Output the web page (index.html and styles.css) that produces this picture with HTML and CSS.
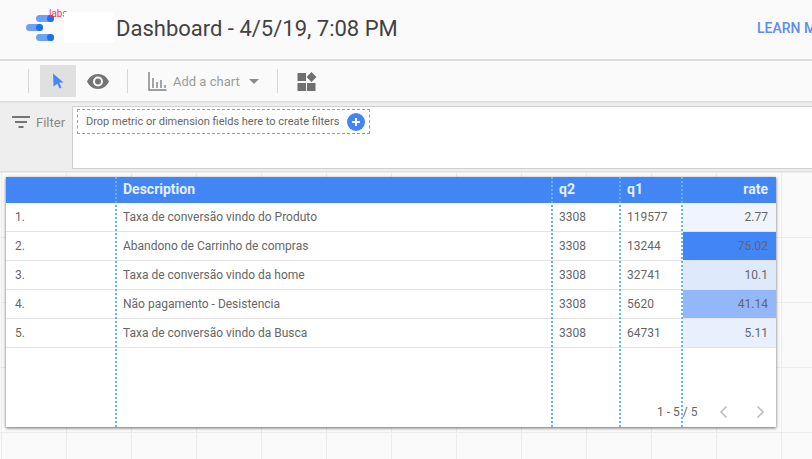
FILE: index.html
```html
<!DOCTYPE html>
<html lang="en">
<head>
<meta charset="utf-8">
<title>Dashboard</title>
<link rel="stylesheet" href="styles.css">
</head>
<body>
<div class="page">
  <header class="topbar">
    <div class="logo">
      <svg class="logo-mark" width="30" height="30" viewBox="0 0 30 30">
        <rect x="11" y="1" width="18" height="7" rx="3.5" fill="#6ea0f6"/><circle cx="25.5" cy="4.5" r="3.5" fill="#1a73e8"/>
        <rect x="1" y="10" width="17" height="7" rx="3.5" fill="#6ea0f6"/><circle cx="14.5" cy="13.5" r="3.5" fill="#1a73e8"/>
        <rect x="11" y="20" width="18" height="7" rx="3.5" fill="#6ea0f6"/><circle cx="25.5" cy="23.5" r="3.5" fill="#1a73e8"/>
      </svg>
      <span class="logo-label">labs</span>
      <span class="logo-mask"></span>
    </div>
    <h1 class="title">Dashboard - 4/5/19, 7:08 PM</h1>
    <a class="learn">LEARN MORE</a>
  </header>

  <nav class="toolbar">
    <span class="sep sep-first"></span>
    <button class="tool tool-active" aria-label="Select">
      <svg width="12" height="16" viewBox="0 0 12 16"><path d="M1 0.5 L11.5 9.5 L7.2 9.8 L9.5 14.6 L7.6 15.5 L5.3 10.7 L1.6 13.5 Z" fill="#4a86f5"/></svg>
    </button>
    <button class="tool tool-eye" aria-label="View">
      <svg width="22" height="15" viewBox="0 0 22 15"><path fill-rule="evenodd" d="M11 0 C16 0 20 3 22 7.5 C20 12 16 15 11 15 C6 15 2 12 0 7.5 C2 3 6 0 11 0 Z M11 2.5 A5 5 0 1 0 11 12.5 A5 5 0 1 0 11 2.5 Z" fill="#757575"/><circle cx="11" cy="7.5" r="3" fill="#757575"/></svg>
    </button>
    <span class="sep sep-second"></span>
    <svg class="chart-icon" width="19" height="20" viewBox="0 0 19 20"><path d="M1 1 V19 H18.500 M5 7 V17 M9 11 V17 M13 9 V17 M17 14 V17" fill="none" stroke="#808080" stroke-width="1.400"/></svg>
    <span class="add-chart">Add a chart</span>
    <svg class="caret" width="10" height="5" viewBox="0 0 10 5"><path d="M0 0 H10 L5 5 Z" fill="#8a8a8a"/></svg>
    <span class="sep sep-third"></span>
    <svg class="widgets" width="20" height="19" viewBox="0 0 20 19"><path d="M0.500 1 H9 V9 H0.500 Z M0.500 11 H9 V19 H0.500 Z M10 11 H18.500 V19 H10 Z M14.500 0 L19.500 5 L14.500 10 L9.500 5 Z" fill="#707070"/></svg>
  </nav>

  <section class="filterbar">
    <div class="filter-label">
      <svg width="18" height="12" viewBox="0 0 18 12"><path d="M0 0 H18 V2 H0 Z M3 5 H15 V7 H3 Z M6.500 10 H11.500 V12 H6.500 Z" fill="#757575"/></svg>
      <span>Filter</span>
    </div>
    <div class="filter-box">
      <div class="dropzone">
        <span>Drop metric or dimension fields here to create filters</span>
        <span class="plus"><svg width="18" height="18" viewBox="0 0 18 18"><circle cx="9" cy="9" r="9" fill="#4285f4"/><path d="M8 5 H10 V8 H13 V10 H10 V13 H8 V10 H5 V8 H8 Z" fill="#fff"/></svg></span>
      </div>
    </div>
  </section>

  <main class="canvas">
    <div class="card">
      <table class="data">
        <colgroup><col class="c-num"><col class="c-desc"><col class="c-q2"><col class="c-q1"><col class="c-rate"></colgroup>
        <thead>
          <tr><th></th><th>Description</th><th>q2</th><th>q1</th><th class="right">rate</th></tr>
        </thead>
        <tbody>
          <tr><td>1.</td><td>Taxa de conversão vindo do Produto</td><td>3308</td><td>119577</td><td class="right" style="background:#eff4fe">2.77</td></tr>
          <tr><td>2.</td><td>Abandono de Carrinho de compras</td><td>3308</td><td>13244</td><td class="right" style="background:#4285f4">75.02</td></tr>
          <tr><td>3.</td><td>Taxa de conversão vindo da home</td><td>3308</td><td>32741</td><td class="right" style="background:#dfe9fc">10.1</td></tr>
          <tr><td>4.</td><td>Não pagamento - Desistencia</td><td>3308</td><td>5620</td><td class="right" style="background:#93b7f9">41.14</td></tr>
          <tr><td>5.</td><td>Taxa de conversão vindo da Busca</td><td>3308</td><td>64731</td><td class="right" style="background:#e8effd">5.11</td></tr>
        </tbody>
      </table>
      <div class="pager">
        <span class="pager-text">1 - 5 / 5</span>
        <svg class="chev" width="9" height="14" viewBox="0 0 9 14"><path d="M7.500 1.500 L2 7 L7.500 12.500" fill="none" stroke="#bdbdbd" stroke-width="1.600"/></svg>
        <svg class="chev chev-next" width="9" height="14" viewBox="0 0 9 14"><path d="M1.500 1.500 L7 7 L1.500 12.500" fill="none" stroke="#bdbdbd" stroke-width="1.600"/></svg>
      </div>
      <span class="guide guide-a"></span>
      <span class="guide guide-b"></span>
      <span class="guide guide-c"></span>
      <span class="guide guide-d"></span>
    </div>
  </main>
</div>
</body>
</html>
```
FILE: styles.css
```css
* { box-sizing: border-box; }
html, body { margin: 0; padding: 0; }
body { font-family: Roboto, "Liberation Sans", sans-serif; color: #666; overflow: hidden; }
.page { width: 812px; height: 459px; overflow: hidden; display: flex; flex-direction: column; background: #fafafa; }

.topbar { height: 61px; flex: none; display: flex; align-items: center; background: #fafafa; border-bottom: 2px solid #dcdcdc; white-space: nowrap; }
.logo { position: relative; width: 116px; height: 59px; flex: none; }
.logo-mark { position: absolute; left: 25px; top: 14px; }
.logo-label { position: absolute; left: 49px; top: 8px; font-size: 10px; line-height: 12px; color: #ff3355; }
.logo-mask { position: absolute; left: 64px; top: 12px; width: 51px; height: 31px; background: #fff; }
.title { margin: 0 0 2px; font-size: 22px; line-height: 28px; font-weight: 400; color: #424242; }
.learn { margin-left: auto; margin-right: -26px; margin-bottom: 4px; font-size: 14px; font-weight: 500; color: #5b8def; width: 81px; overflow: hidden; }

.toolbar { height: 41px; flex: none; display: flex; align-items: center; background: #fafafa; border-bottom: 1px solid #dcdcdc; padding-left: 28px; }
.sep { width: 1px; height: 24px; background: #d8d8d8; flex: none; }
.tool { border: 0; padding: 0; background: none; display: flex; align-items: center; justify-content: center; flex: none; }
.tool-active { width: 36px; height: 32px; background: #e0e0e0; margin-left: 11px; }
.tool-eye { width: 22px; height: 15px; margin-left: 11px; }
.sep-second { margin-left: 18px; }
.chart-icon { margin-left: 20px; flex: none; }
.add-chart { margin-left: 6px; font-size: 13px; color: #9a9a9a; white-space: nowrap; }
.caret { margin-left: 9px; flex: none; }
.sep-third { margin-left: 18px; }
.widgets { margin-left: 19px; flex: none; }

.filterbar { height: 70px; flex: none; display: flex; background: #eeeeee; border-bottom: 1px solid #dedede; border-top: 1px solid #e4e4e4; }
.filter-label { width: 72px; flex: none; display: flex; align-items: flex-start; padding: 12px 0 0 12px; font-size: 13px; color: #888; }
.filter-label svg { margin-top: 1px; flex: none; }
.filter-label span { margin-left: 6px; line-height: 15px; }
.filter-box { flex: 1; height: 63px; margin-top: 3px; background: #fff; border: 1px solid #cfcfcf; border-right: 0; padding: 2px 0 0 4px; }
.dropzone { display: inline-flex; align-items: center; width: 293px; height: 25px; padding-left: 8px; border: 1px dashed #9e9e9e; font-size: 11px; color: #666; white-space: nowrap; }
.plus { margin-left: auto; margin-right: 4px; display: flex; }

.canvas { flex: 1; min-height: 0; padding: 5px 0 0 6px; background-color: #fafafa;
  background-image: linear-gradient(#ececec 1px, transparent 1px), linear-gradient(90deg, #ececec 1px, transparent 1px);
  background-size: 65px 65px; background-position: 1px 0; }
.card { position: relative; width: 770px; height: 250px; background: #fff; box-shadow: 0 1px 3px rgba(0,0,0,.6); display: flex; flex-direction: column; }

.data { width: 770px; table-layout: fixed; border-collapse: separate; border-spacing: 0; font-size: 12px; }
.c-num { width: 110px; }
.c-desc { width: 436px; }
.c-q2 { width: 68px; }
.c-q1 { width: 63px; }
.c-rate { width: 93px; }
.data th { height: 26px; padding: 0 8px 2px 7px; background: #4285f4; color: #e6effe; font-size: 14px; font-weight: 700; text-align: left; }
.data td { height: 29px; padding: 0 8px 0 7px; border-bottom: 1px solid #e4e4e4; color: #666; }
.data td:first-child { padding-left: 9px; }
.data .right { text-align: right; }

.pager { margin-top: auto; height: 31px; display: flex; align-items: center; font-size: 12px; color: #666; padding-left: 651px; }
.pager-text { width: 40px; white-space: nowrap; }
.chev { margin-left: 22px; flex: none; }
.chev-next { margin-left: 28px; }

.guide { position: absolute; top: 0; bottom: 0; width: 2px; background-image: linear-gradient(#64b5f6 2px, transparent 2px); background-size: 2px 4px; }
.guide-a { left: 109px; }
.guide-b { left: 545px; }
.guide-c { left: 613px; }
.guide-d { left: 675px; }
```
